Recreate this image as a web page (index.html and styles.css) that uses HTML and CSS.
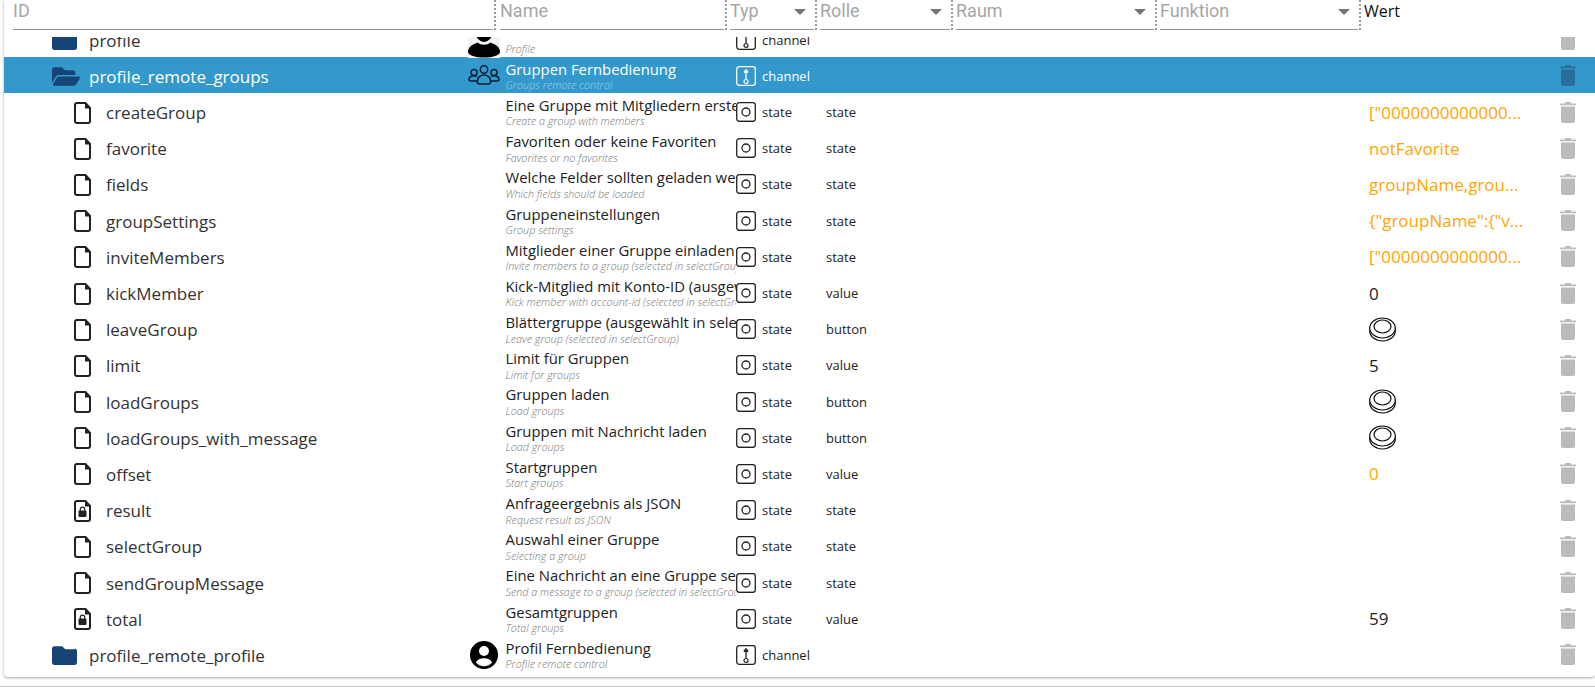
FILE: index.html
```html
<!DOCTYPE html>
<html lang="de">
<head>
<meta charset="utf-8">
<title>Objekte</title>
<link rel="stylesheet" href="styles.css">
</head>
<body>
<svg class="defs" width="0" height="0" aria-hidden="true">
  <symbol id="i-folder" viewBox="0 0 512 512"><path d="M464 128H272l-64-64H48C21.49 64 0 85.49 0 112v288c0 26.51 21.49 48 48 48h416c26.51 0 48-21.49 48-48V160c0-26.51-21.49-48-48-48z"/></symbol>
  <symbol id="i-open" viewBox="0 0 576 512"><path d="M572.694 292.093L500.27 416.248A63.997 63.997 0 0 1 444.989 448H45.025c-18.523 0-30.064-20.093-20.731-36.093l72.424-124.155A64 64 0 0 1 152 256h399.964c18.523 0 30.064 20.093 20.73 36.093zM152 224h328v-48c0-26.51-21.49-48-48-48H272l-64-64H48C21.49 64 0 85.49 0 112v278.046l69.077-118.418C86.214 242.25 117.989 224 152 224z"/></symbol>
  <symbol id="i-file" viewBox="0 0 17 22"><path d="M3 1h8.500l4.500 5v13a2 2 0 0 1-2 2H3a2 2 0 0 1-2-2V3a2 2 0 0 1 2-2z" fill="none" stroke="#222" stroke-width="2"/><path d="M11 1v5.500h5z" fill="#222"/></symbol>
  <symbol id="i-lock" viewBox="0 0 17 22"><path d="M3 1h8.500l4.500 5v13a2 2 0 0 1-2 2H3a2 2 0 0 1-2-2V3a2 2 0 0 1 2-2z" fill="none" stroke="#222" stroke-width="2"/><path d="M11 1v5.500h5z" fill="#222"/><rect x="4.500" y="10.500" width="8" height="6.500" rx="1" fill="#222"/><path d="M6.300 11V9.300a2.200 2.200 0 0 1 4.400 0V11" fill="none" stroke="#222" stroke-width="1.200"/></symbol>
  <symbol id="i-state" viewBox="0 0 20 20"><rect x=".7" y=".7" width="18.600" height="18.600" rx="2.500" fill="none" stroke="currentColor" stroke-width="1.300"/><path d="M2 19.300h16" stroke="currentColor" stroke-width="1"/><circle cx="10" cy="10" r="4" fill="none" stroke="currentColor" stroke-width="1.300"/></symbol>
  <symbol id="i-channel" viewBox="0 0 20 20"><rect x=".7" y=".7" width="18.600" height="18.600" rx="2.500" fill="none" stroke="currentColor" stroke-width="1.300"/><path d="M10 3v10" stroke="currentColor" stroke-width="1.300"/><rect x="7.800" y="4.500" width="4.400" height="2.500" fill="currentColor"/><circle cx="10" cy="15.500" r="2" fill="none" stroke="currentColor" stroke-width="1.200"/></symbol>
  <symbol id="i-trash" viewBox="0 0 16 21"><path d="M5.500 0h5l1 1.500H16v1.700H0V1.500h4.500z"/><path d="M1 4.500h14V19a2 2 0 0 1-2 2H3a2 2 0 0 1-2-2z"/></symbol>
  <symbol id="i-button" viewBox="0 0 27 25"><g fill="none" stroke="#111" stroke-width="1.200"><ellipse cx="13.500" cy="14" rx="12.800" ry="10"/><ellipse cx="13.500" cy="11" rx="12.800" ry="10" fill="#fff"/><ellipse cx="13.500" cy="9.500" rx="8.500" ry="6.500"/></g></symbol>
  <symbol id="i-group" viewBox="0 0 32 20"><g fill="none" stroke="#0b1e33" stroke-width="1.500"><circle cx="16" cy="4.500" r="3.700"/><circle cx="6" cy="7.500" r="3"/><circle cx="26" cy="7.500" r="3"/><path d="M9.500 19v-3.500c0-3 3-5.500 6.500-5.500s6.500 2.500 6.500 5.500V17a2 2 0 0 1-2 2h-9a2 2 0 0 1-2-2z"/><path d="M9.500 16H3c-1.200 0-2.200-.8-2-2 .4-2 2.500-3.300 5-3.300 1 0 2 .2 3 .7"/><path d="M22.500 16H29c1.200 0 2.200-.8 2-2-.4-2-2.500-3.300-5-3.300-1 0-2 .2-3 .7"/></g></symbol>
  <symbol id="i-person" viewBox="0 0 32 35"><rect width="32" height="35" fill="#f3f3f3"/><ellipse cx="16" cy="10" rx="8" ry="9"/><path d="M0 29C0 23.500 6 20.500 10 19.500C12 22.500 20 22.500 22 19.500C26 20.500 32 23.500 32 29C32 32.500 24 34.500 16 34.500C8 34.500 0 32.500 0 29Z"/></symbol>
  <symbol id="i-account" viewBox="0 0 28 28"><path fill-rule="evenodd" d="M14 0a14 14 0 1 1 0 28a14 14 0 0 1 0-28zm0 5a5 5 0 1 0 0 10a5 5 0 0 0 0-10zm0 12.200c-3.600 0-7 1.500-8.200 4.200a10.800 10.800 0 0 0 16.400 0c-1.200-2.700-4.600-4.200-8.200-4.200z"/></symbol>
</svg>
<div class="page">
  <main class="card">
    <header class="head">
      <div class="hcell hcell-id"><div class="hfield">ID</div></div>
      <div class="hcell hcell-name"><div class="hfield">Name</div></div>
      <div class="hcell hcell-typ"><div class="hfield">Typ<span class="caret"></span></div></div>
      <div class="hcell hcell-role"><div class="hfield">Rolle<span class="caret"></span></div></div>
      <div class="hcell hcell-room"><div class="hfield">Raum<span class="caret"></span></div></div>
      <div class="hcell hcell-func"><div class="hfield">Funktion<span class="caret"></span></div></div>
      <div class="hvalue">Wert</div>
    </header>
    <div class="scroller">
      <div class="rows">
        <div class="row">
          <div class="c-id lvl1"><svg class="ico-folder"><use href="#i-folder"/></svg><span>profile</span></div>
          <div class="c-icon"><svg class="ico-person"><use href="#i-person"/></svg></div>
          <div class="c-name"><div class="n1">&nbsp;</div><div class="n2">Profile</div></div>
          <div class="c-typ"><svg class="ico-typ"><use href="#i-channel"/></svg>channel</div>
          <div class="c-role"></div><div class="c-val"></div>
          <div class="c-del"><svg class="ico-trash"><use href="#i-trash"/></svg></div>
        </div>
        <div class="row selected">
          <div class="c-id lvl1"><svg class="ico-open"><use href="#i-open"/></svg><span>profile_remote_groups</span></div>
          <div class="c-icon"><svg class="ico-group"><use href="#i-group"/></svg></div>
          <div class="c-name"><div class="n1">Gruppen Fernbedienung</div><div class="n2">Groups remote control</div></div>
          <div class="c-typ"><svg class="ico-typ"><use href="#i-channel"/></svg>channel</div>
          <div class="c-role"></div><div class="c-val"></div>
          <div class="c-del"><svg class="ico-trash"><use href="#i-trash"/></svg></div>
        </div>
        <div class="row">
          <div class="c-id lvl2"><svg class="ico-file"><use href="#i-file"/></svg><span>createGroup</span></div>
          <div class="c-icon"></div>
          <div class="c-name"><div class="n1">Eine Gruppe mit Mitgliedern erstellen</div><div class="n2">Create a group with members</div></div>
          <div class="c-typ"><svg class="ico-typ"><use href="#i-state"/></svg>state</div>
          <div class="c-role">state</div><div class="c-val v-ack">["0000000000000...</div>
          <div class="c-del"><svg class="ico-trash"><use href="#i-trash"/></svg></div>
        </div>
        <div class="row">
          <div class="c-id lvl2"><svg class="ico-file"><use href="#i-file"/></svg><span>favorite</span></div>
          <div class="c-icon"></div>
          <div class="c-name"><div class="n1">Favoriten oder keine Favoriten</div><div class="n2">Favorites or no favorites</div></div>
          <div class="c-typ"><svg class="ico-typ"><use href="#i-state"/></svg>state</div>
          <div class="c-role">state</div><div class="c-val v-ack">notFavorite</div>
          <div class="c-del"><svg class="ico-trash"><use href="#i-trash"/></svg></div>
        </div>
        <div class="row">
          <div class="c-id lvl2"><svg class="ico-file"><use href="#i-file"/></svg><span>fields</span></div>
          <div class="c-icon"></div>
          <div class="c-name"><div class="n1">Welche Felder sollten geladen werden</div><div class="n2">Which fields should be loaded</div></div>
          <div class="c-typ"><svg class="ico-typ"><use href="#i-state"/></svg>state</div>
          <div class="c-role">state</div><div class="c-val v-ack">groupName,grou...</div>
          <div class="c-del"><svg class="ico-trash"><use href="#i-trash"/></svg></div>
        </div>
        <div class="row">
          <div class="c-id lvl2"><svg class="ico-file"><use href="#i-file"/></svg><span>groupSettings</span></div>
          <div class="c-icon"></div>
          <div class="c-name"><div class="n1">Gruppeneinstellungen</div><div class="n2">Group settings</div></div>
          <div class="c-typ"><svg class="ico-typ"><use href="#i-state"/></svg>state</div>
          <div class="c-role">state</div><div class="c-val v-ack">{"groupName":{"v...</div>
          <div class="c-del"><svg class="ico-trash"><use href="#i-trash"/></svg></div>
        </div>
        <div class="row">
          <div class="c-id lvl2"><svg class="ico-file"><use href="#i-file"/></svg><span>inviteMembers</span></div>
          <div class="c-icon"></div>
          <div class="c-name"><div class="n1">Mitglieder einer Gruppe einladen (ausgewählt in selectGroup)</div><div class="n2">Invite members to a group (selected in selectGroup)</div></div>
          <div class="c-typ"><svg class="ico-typ"><use href="#i-state"/></svg>state</div>
          <div class="c-role">state</div><div class="c-val v-ack">["0000000000000...</div>
          <div class="c-del"><svg class="ico-trash"><use href="#i-trash"/></svg></div>
        </div>
        <div class="row">
          <div class="c-id lvl2"><svg class="ico-file"><use href="#i-file"/></svg><span>kickMember</span></div>
          <div class="c-icon"></div>
          <div class="c-name"><div class="n1">Kick-Mitglied mit Konto-ID (ausgewählt in selectGroup)</div><div class="n2">Kick member with account-id (selected in selectGroup)</div></div>
          <div class="c-typ"><svg class="ico-typ"><use href="#i-state"/></svg>state</div>
          <div class="c-role">value</div><div class="c-val">0</div>
          <div class="c-del"><svg class="ico-trash"><use href="#i-trash"/></svg></div>
        </div>
        <div class="row">
          <div class="c-id lvl2"><svg class="ico-file"><use href="#i-file"/></svg><span>leaveGroup</span></div>
          <div class="c-icon"></div>
          <div class="c-name"><div class="n1">Blättergruppe (ausgewählt in selectGroup)</div><div class="n2">Leave group (selected in selectGroup)</div></div>
          <div class="c-typ"><svg class="ico-typ"><use href="#i-state"/></svg>state</div>
          <div class="c-role">button</div><div class="c-val"><svg class="ico-button"><use href="#i-button"/></svg></div>
          <div class="c-del"><svg class="ico-trash"><use href="#i-trash"/></svg></div>
        </div>
        <div class="row">
          <div class="c-id lvl2"><svg class="ico-file"><use href="#i-file"/></svg><span>limit</span></div>
          <div class="c-icon"></div>
          <div class="c-name"><div class="n1">Limit für Gruppen</div><div class="n2">Limit for groups</div></div>
          <div class="c-typ"><svg class="ico-typ"><use href="#i-state"/></svg>state</div>
          <div class="c-role">value</div><div class="c-val">5</div>
          <div class="c-del"><svg class="ico-trash"><use href="#i-trash"/></svg></div>
        </div>
        <div class="row">
          <div class="c-id lvl2"><svg class="ico-file"><use href="#i-file"/></svg><span>loadGroups</span></div>
          <div class="c-icon"></div>
          <div class="c-name"><div class="n1">Gruppen laden</div><div class="n2">Load groups</div></div>
          <div class="c-typ"><svg class="ico-typ"><use href="#i-state"/></svg>state</div>
          <div class="c-role">button</div><div class="c-val"><svg class="ico-button"><use href="#i-button"/></svg></div>
          <div class="c-del"><svg class="ico-trash"><use href="#i-trash"/></svg></div>
        </div>
        <div class="row">
          <div class="c-id lvl2"><svg class="ico-file"><use href="#i-file"/></svg><span>loadGroups_with_message</span></div>
          <div class="c-icon"></div>
          <div class="c-name"><div class="n1">Gruppen mit Nachricht laden</div><div class="n2">Load groups</div></div>
          <div class="c-typ"><svg class="ico-typ"><use href="#i-state"/></svg>state</div>
          <div class="c-role">button</div><div class="c-val"><svg class="ico-button"><use href="#i-button"/></svg></div>
          <div class="c-del"><svg class="ico-trash"><use href="#i-trash"/></svg></div>
        </div>
        <div class="row">
          <div class="c-id lvl2"><svg class="ico-file"><use href="#i-file"/></svg><span>offset</span></div>
          <div class="c-icon"></div>
          <div class="c-name"><div class="n1">Startgruppen</div><div class="n2">Start groups</div></div>
          <div class="c-typ"><svg class="ico-typ"><use href="#i-state"/></svg>state</div>
          <div class="c-role">value</div><div class="c-val v-ack">0</div>
          <div class="c-del"><svg class="ico-trash"><use href="#i-trash"/></svg></div>
        </div>
        <div class="row">
          <div class="c-id lvl2"><svg class="ico-file"><use href="#i-lock"/></svg><span>result</span></div>
          <div class="c-icon"></div>
          <div class="c-name"><div class="n1">Anfrageergebnis als JSON</div><div class="n2">Request result as JSON</div></div>
          <div class="c-typ"><svg class="ico-typ"><use href="#i-state"/></svg>state</div>
          <div class="c-role">state</div><div class="c-val"></div>
          <div class="c-del"><svg class="ico-trash"><use href="#i-trash"/></svg></div>
        </div>
        <div class="row">
          <div class="c-id lvl2"><svg class="ico-file"><use href="#i-file"/></svg><span>selectGroup</span></div>
          <div class="c-icon"></div>
          <div class="c-name"><div class="n1">Auswahl einer Gruppe</div><div class="n2">Selecting a group</div></div>
          <div class="c-typ"><svg class="ico-typ"><use href="#i-state"/></svg>state</div>
          <div class="c-role">state</div><div class="c-val"></div>
          <div class="c-del"><svg class="ico-trash"><use href="#i-trash"/></svg></div>
        </div>
        <div class="row">
          <div class="c-id lvl2"><svg class="ico-file"><use href="#i-file"/></svg><span>sendGroupMessage</span></div>
          <div class="c-icon"></div>
          <div class="c-name"><div class="n1">Eine Nachricht an eine Gruppe senden (ausgewählt in selectGroup)</div><div class="n2">Send a message to a group (selected in selectGroup)</div></div>
          <div class="c-typ"><svg class="ico-typ"><use href="#i-state"/></svg>state</div>
          <div class="c-role">state</div><div class="c-val"></div>
          <div class="c-del"><svg class="ico-trash"><use href="#i-trash"/></svg></div>
        </div>
        <div class="row">
          <div class="c-id lvl2"><svg class="ico-file"><use href="#i-lock"/></svg><span>total</span></div>
          <div class="c-icon"></div>
          <div class="c-name"><div class="n1">Gesamtgruppen</div><div class="n2">Total groups</div></div>
          <div class="c-typ"><svg class="ico-typ"><use href="#i-state"/></svg>state</div>
          <div class="c-role">value</div><div class="c-val">59</div>
          <div class="c-del"><svg class="ico-trash"><use href="#i-trash"/></svg></div>
        </div>
        <div class="row">
          <div class="c-id lvl1"><svg class="ico-folder"><use href="#i-folder"/></svg><span>profile_remote_profile</span></div>
          <div class="c-icon"><svg class="ico-account"><use href="#i-account"/></svg></div>
          <div class="c-name"><div class="n1">Profil Fernbedienung</div><div class="n2">Profile remote control</div></div>
          <div class="c-typ"><svg class="ico-typ"><use href="#i-channel"/></svg>channel</div>
          <div class="c-role"></div><div class="c-val"></div>
          <div class="c-del"><svg class="ico-trash"><use href="#i-trash"/></svg></div>
        </div>
        <div class="row row-next"><div class="c-id"></div><div class="c-icon"><span class="peek"></span></div></div>
      </div>
    </div>
  </main>
  <div class="rule"></div>
</div>
</body>
</html>
```

FILE: styles.css
```css
* { box-sizing: border-box; }
html, body { margin: 0; height: 100%; overflow: hidden; background: #fff; }
body { font-family: "Open Sans", "Noto Sans", sans-serif; color: #222; }
.defs { position: absolute; }

.page { height: 687px; display: flex; flex-direction: column; }
.card {
  height: 677px;
  margin-left: 4px;
  background: #fff;
  border-radius: 0 0 4px 4px;
  box-shadow: 0 1px 3px rgba(0, 0, 0, .35);
  display: flex;
  flex-direction: column;
}
.rule { margin-top: 9px; height: 1px; background: #c8c8c8; }

.head { height: 37px; flex: none; display: flex; padding-left: 9px; column-gap: 3px; }
.hcell { height: 30px; display: flex; border-right: 2px dotted #9a9a9a; padding-right: 1.500px; }
.hcell-id { width: 483px; margin-right: 1px; }
.hcell-name { width: 227px; }
.hcell-typ { width: 87px; }
.hcell-role { width: 133px; }
.hcell-room { width: 201px; }
.hcell-func { width: 201px; }
.hfield {
  flex: 1;
  display: flex;
  justify-content: space-between;
  border-bottom: 1px solid #949494;
  font-family: Roboto, "Liberation Sans", sans-serif;
  font-size: 18px;
  line-height: 21px;
  color: #a6a6a6;
}
.caret {
  width: 0;
  height: 0;
  margin: 9px 8px 0 0;
  border-left: 6px solid transparent;
  border-right: 6px solid transparent;
  border-top: 6px solid #757575;
}
.hvalue { font-size: 16px; line-height: 22px; color: #111; }

.scroller { height: 640px; overflow: hidden; }
.rows { margin-top: -15.900px; }
.row {
  height: 36.190px;
  display: grid;
  grid-template-columns: 464px 32px 236px 90px 543px 191px 31px;
  align-items: center;
}
.selected { background: #3399cc; color: #fff; }

.c-id { display: flex; align-items: center; font-size: 17px; color: #333; white-space: nowrap; padding-top: 2px; }
.selected .c-id { color: #fff; }
.lvl1 { padding-left: 48px; column-gap: 12px; }
.lvl2 { padding-left: 70px; column-gap: 15px; }
.ico-folder { width: 25px; height: 25px; fill: #164477; flex: none; }
.ico-open { width: 28px; height: 25px; fill: #164477; flex: none; margin-right: -3px; }
.ico-file { width: 17px; height: 22px; flex: none; }

.c-icon { height: 36px; display: flex; align-items: center; justify-content: center; }
.ico-group { width: 32px; height: 20px; }
.ico-person { width: 32px; height: 35px; align-self: flex-end; margin-bottom: -1px; }
.ico-account { width: 28px; height: 28px; margin-top: 2px; }
.peek { width: 13px; height: 2px; background: #c8c8c8; align-self: flex-start; margin: 4px 0 0 -18px; }

.c-name { height: 100%; padding: 2.500px 0 0 5.500px; overflow: hidden; white-space: nowrap; }
.n1 { font-size: 14.850px; line-height: 18px; color: #222; }
.n2 { font-size: 10.800px; line-height: 14px; margin-top: .500px; font-style: italic; font-weight: 300; color: #777; }
.selected .n1 { color: #fff; }
.selected .n2 { color: rgba(255, 255, 255, .5); }

.c-typ { display: flex; align-items: center; column-gap: 6px; font-size: 13px; color: #222; padding-top: 1px; }
.selected .c-typ { color: #fff; }
.ico-typ { width: 20px; height: 20px; color: #222; flex: none; }
.selected .ico-typ { color: #fff; }
.c-role { font-size: 13px; color: #222; padding-top: 1px; }

.c-val { font-size: 17px; color: #222; white-space: nowrap; display: flex; align-items: center; padding-top: 1px; }
.v-ack { color: #ffa500; }
.ico-button { width: 27px; height: 25px; }
.c-del { display: flex; align-items: center; padding-top: 1px; }
.ico-trash { width: 16px; height: 21px; fill: #bbb; }
.selected .ico-trash { fill: #2a6f9b; }
```
